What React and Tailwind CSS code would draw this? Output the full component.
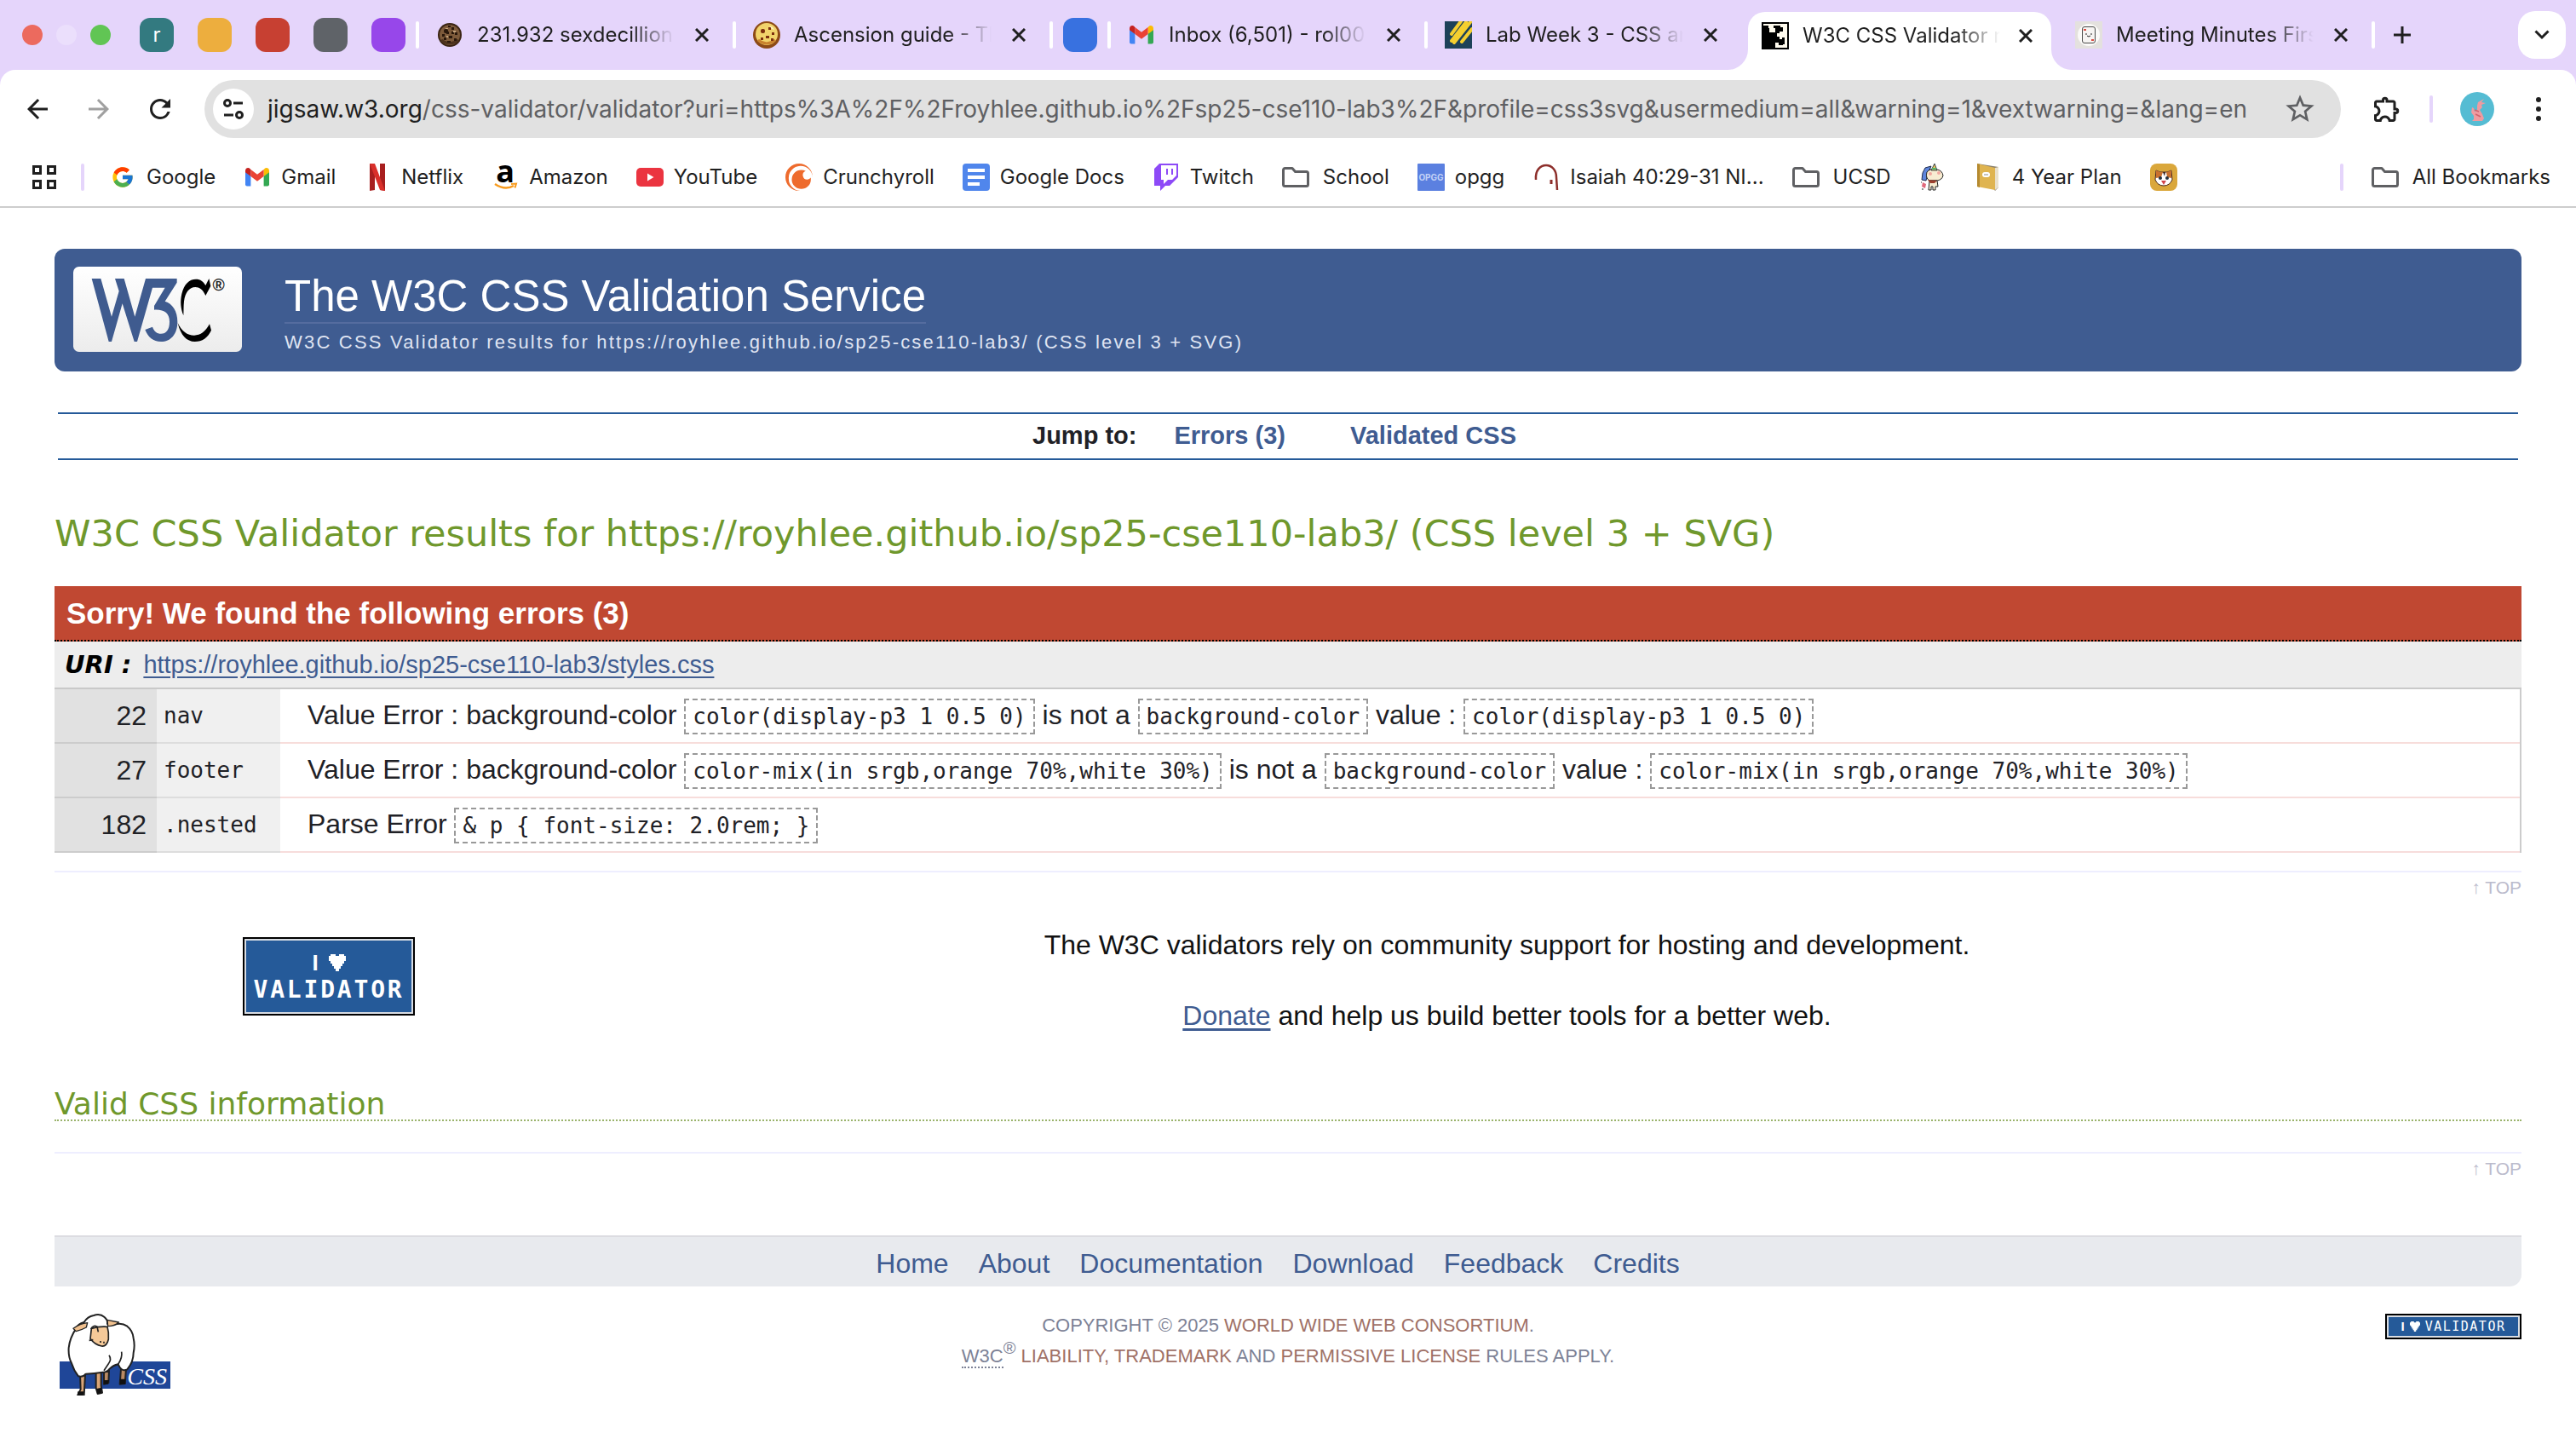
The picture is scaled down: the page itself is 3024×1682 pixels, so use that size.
import React from "react";
import { FcGoogle } from "react-icons/fc";
import { SiCrunchyroll } from "react-icons/si";
import {
  MdArrowBack,
  MdArrowForward,
  MdRefresh,
  MdStarBorder,
  MdOutlineExtension,
} from "react-icons/md";

const UI_FONT = "font-['Inter','Liberation_Sans',sans-serif]";
const PAGE_FONT = "font-['Liberation_Sans',Arial,sans-serif]";
const VERDANA = "font-['DejaVu_Sans',Verdana,sans-serif]";
const MONO = "font-['DejaVu_Sans_Mono',Menlo,monospace]";

/* ---------- favicons ---------- */

function Cookie({ dark }) {
  const base = dark ? "#7d5a3a" : "#f1d36b";
  const rim = dark ? "#3a2413" : "#8d4a17";
  const chip = dark ? "#2a180b" : "#7c2f0e";
  return (
    <svg viewBox="0 0 32 32" className="size-8 shrink-0" aria-hidden="true">
      <circle cx="16" cy="16" r={dark ? 14 : 16} fill={rim} />
      <circle cx="16" cy={dark ? 16 : 15} r={dark ? 12 : 13} fill={base} />
      <path d="M6 22q10 8 20 0" stroke={dark ? "#4d321c" : "#c9822e"} strokeWidth="3" fill="none" />
      <g fill={chip}>
        <rect x="9" y="9" width="5" height="5" rx="2" />
        <rect x="18" y="7" width="3" height="3" />
        <rect x="22" y="13" width="3" height="3" />
        <rect x="15" y="17" width="4" height="3" />
        <rect x="9" y="19" width="3" height="3" />
        <rect x="21" y="20" width="3" height="3" />
        {dark && <path d="M7 15h3v3H7zM12 12h3v3h-3zM18 12h3v3h-3zM13 23h4v2h-4zM14 5h3v2h-3z" />}
      </g>
      <path d={dark ? "M11 8h3v1h-3zM20 11h3v2h-3zM12 17h2v2h-2z" : "M19 5l4 2 2 3-3-1z"} fill={dark ? "#c5a57c" : "#fff3bf"} />
    </svg>
  );
}

function Gmail() {
  return (
    <svg viewBox="0 0 28 22" className="mx-0.5 w-7 shrink-0" aria-hidden="true">
      <path d="M0 4v15.5A2 2 0 0 0 2 21.500H6.400V9.500z" fill="#4285f4" />
      <path d="M28 4v15.500a2 2 0 0 1-2 2h-4.400V9.500z" fill="#34a853" />
      <path d="M21.600 2.200V10L28 5.200V3.400c0-3-3.300-4.200-5.500-2.500z" fill="#fbbc04" />
      <path d="M6.400 10V2L14 7.700 21.600 2v8L14 15.700z" fill="#ea4335" />
      <path d="M0 3.400v1.800L6.400 10V2.200L5.500.9C3.300-.8 0 .4 0 3.400z" fill="#c5221f" />
    </svg>
  );
}

function LabIcon() {
  return (
    <svg viewBox="0 0 32 32" className="size-8 shrink-0" aria-hidden="true">
      <rect width="32" height="32" fill="#1d4259" />
      <g stroke="#f5cf2f" strokeWidth="4" strokeLinecap="round">
        <path d="M8 15 19 0M8 23 25 1M11 25 30 1M20 24 32 9" />
      </g>
      <path d="M29 20 32 15v10z" fill="#1d4259" />
    </svg>
  );
}

function JigsawIcon() {
  return (
    <svg viewBox="0 0 32 32" className="size-8 shrink-0" aria-hidden="true">
      <rect width="32" height="32" fill="#000" />
      <path d="M2 2h28v28H16v-6h4v3h5v-1h2v-8h-3v2h-3v-3h-3v-4h3v-2h4V6h-3V4h-8v3h2v5H9V7H8V4H2z" fill="#fffbee" />
    </svg>
  );
}

function CardIcon() {
  return (
    <svg viewBox="0 0 32 32" className="size-8 shrink-0" aria-hidden="true">
      <rect width="32" height="32" fill="#e4e1de" />
      <circle cx="16" cy="16" r="13" fill="#fbfaf8" />
      <rect x="8.500" y="6.500" width="15" height="19" rx="2.500" fill="#f6f4f2" stroke="#4a4a4a" />
      <path d="M13 14v2M19 14v2M14 17q2 2 4 0" stroke="#222" fill="none" />
      <path d="M10 9h3v2h-3zM19 21h3v2h-3z" fill="#dc4b41" />
    </svg>
  );
}

/* ---------- tab strip ---------- */

const Divider = ({ className = "" }) => (
  <span className={"h-8 w-1 shrink-0 rounded-full bg-white " + className} />
);

const Close = ({ title }) => (
  <button type="button" aria-label={"Close " + title} className="ml-auto flex size-8 shrink-0 items-center justify-center">
    <svg viewBox="0 0 16 16" className="size-4" stroke="#1f1f1f" strokeWidth="3" aria-hidden="true">
      <path d="M1 1l14 14M15 1L1 15" />
    </svg>
  </button>
);

function TabBody({ icon, title }) {
  return (
    <>
      {icon}
      <span className="ml-4 w-[232px] overflow-hidden whitespace-nowrap text-2xl [mask-image:linear-gradient(to_right,black_78%,transparent)]">
        {title}
      </span>
      <Close title={title} />
    </>
  );
}

const Tab = (props) => (
  <div className="mx-5 flex w-[328px] shrink-0 items-center">
    <TabBody {...props} />
  </div>
);

function ActiveTab(props) {
  return (
    <div className="relative ml-2 flex h-[68px] w-[356px] shrink-0 items-center self-end rounded-t-[20px] bg-white pr-[14px] pb-3 pl-4">
      <svg viewBox="0 0 24 24" className="absolute bottom-0 -left-6 size-6" aria-hidden="true">
        <path d="M24 0v24H0A24 24 0 0 0 24 0z" fill="#fff" />
      </svg>
      <TabBody {...props} />
      <svg viewBox="0 0 24 24" className="absolute -right-6 bottom-0 size-6" aria-hidden="true">
        <path d="M0 0v24h24A24 24 0 0 1 0 0z" fill="#fff" />
      </svg>
    </div>
  );
}

function TabStrip() {
  return (
    <div className="flex h-[82px] items-center bg-[#e5d5fb] pr-3 pl-[26px]">
      <div className="flex shrink-0 gap-4">
        <span className="size-6 rounded-full bg-[#ec6a5e]" />
        <span className="size-6 rounded-full bg-[#ebdffc]" />
        <span className="size-6 rounded-full bg-[#61c554]" />
      </div>
      <div className="ml-[34px] flex shrink-0 gap-7">
        <span className="flex size-10 items-center justify-center rounded-xl bg-[#337a80] text-2xl text-white">r</span>
        <span className="size-10 rounded-xl bg-[#edae3e]" />
        <span className="size-10 rounded-xl bg-[#c74032]" />
        <span className="size-10 rounded-xl bg-[#5f6368]" />
        <span className="size-10 rounded-xl bg-[#9747ea]" />
      </div>
      <Divider className="ml-3" />
      <Tab icon={<Cookie dark />} title="231.932 sexdecillion" />
      <Divider />
      <Tab icon={<Cookie />} title="Ascension guide - Th" />
      <Divider />
      <span className="mx-3 size-10 shrink-0 rounded-xl bg-[#3871e0]" />
      <Divider />
      <Tab icon={<Gmail />} title="Inbox (6,501) - rol00" />
      <Divider />
      <Tab icon={<LabIcon />} title="Lab Week 3 - CSS an" />
      <ActiveTab icon={<JigsawIcon />} title="W3C CSS Validator r" />
      <div className="w-2 shrink-0" />
      <Tab icon={<CardIcon />} title="Meeting Minutes Firs" />
      <Divider />
      <button type="button" aria-label="New tab" className="ml-4 flex size-8 shrink-0 items-center justify-center">
        <svg viewBox="0 0 20 20" className="size-5" stroke="#1f1f1f" strokeWidth="3" aria-hidden="true">
          <path d="M10 0v20M0 10h20" />
        </svg>
      </button>
      <button type="button" aria-label="Search tabs" className="ml-auto flex size-14 shrink-0 items-center justify-center rounded-[20px] bg-white">
        <svg viewBox="0 0 18 12" className="w-[18px]" fill="none" stroke="#1f1f1f" strokeWidth="3" aria-hidden="true">
          <path d="M1.500 1.500 9 9l7.500-7.500" />
        </svg>
      </button>
    </div>
  );
}

/* ---------- toolbar ---------- */

function Toolbar() {
  return (
    <div className="bg-[#e5d5fb]">
      <div className="flex items-center rounded-t-[18px] bg-white pt-3 pr-7 pb-3 pl-[26px]">
        <button type="button" aria-label="Back"><MdArrowBack className="size-9 text-[#1f1f1f]" /></button>
        <button type="button" aria-label="Forward" className="ml-9"><MdArrowForward className="size-9 text-[#a0a0a0]" /></button>
        <button type="button" aria-label="Reload" className="ml-9"><MdRefresh className="size-9 text-[#1f1f1f]" /></button>
        <div className="ml-[34px] flex h-[68px] flex-1 items-center rounded-full bg-[#e1e1e1] pr-7 pl-[10px]">
          <button type="button" aria-label="View site information" className="flex size-12 items-center justify-center rounded-full bg-white">
            <svg viewBox="0 0 24 24" className="size-6" fill="none" stroke="#1f1f1f" strokeWidth="3" aria-hidden="true">
              <circle cx="5" cy="5" r="3.500" />
              <path d="M12 5h11" />
              <circle cx="19" cy="19" r="3.500" />
              <path d="M1 19h11" />
            </svg>
          </button>
          <div className="ml-4 whitespace-nowrap text-[28px] leading-9 text-[#5f6063]">
            <span className="text-[#1f1f1f]">jigsaw.w3.org</span>
            /css-validator/validator?uri=https%3A%2F%2Froyhlee.github.io%2Fsp25-cse110-lab3%2F&amp;profile=css3svg&amp;usermedium=all&amp;warning=1&amp;vextwarning=&amp;lang=en
          </div>
          <button type="button" aria-label="Bookmark this tab" className="ml-auto"><MdStarBorder className="size-10 text-[#5f6063]" /></button>
        </div>
        <button type="button" aria-label="Extensions" className="ml-9"><MdOutlineExtension className="size-9 text-[#1f1f1f]" /></button>
        <span className="ml-8 h-8 w-1 rounded-full bg-[#e5d5fb]" />
        <button type="button" aria-label="Profile" className="ml-8 size-10">
          <svg viewBox="0 0 40 40" className="size-10" aria-hidden="true">
            <circle cx="20" cy="20" r="20" fill="#55bcd3" />
            <path d="M20 16l1-4 7-4-3 4 5 1-5 2 1 3-3 3 3 5 2 5-2 3H14l2-2 0-4-3-4 1-6 2 1 1 4 3-2z" fill="#ef9ba0" />
            <path d="M17 21l5 2M18 26l6 3" stroke="#d0626c" strokeWidth="1.500" />
          </svg>
        </button>
        <button type="button" aria-label="Menu" className="ml-9 flex size-8 items-center justify-center">
          <svg viewBox="0 0 6 28" className="h-7" fill="#1f1f1f" aria-hidden="true">
            <circle cx="3" cy="3" r="3" />
            <circle cx="3" cy="14" r="3" />
            <circle cx="3" cy="25" r="3" />
          </svg>
        </button>
      </div>
    </div>
  );
}

/* ---------- bookmarks ---------- */

const Folder = () => (
  <svg viewBox="0 0 32 24" className="mr-1 w-8 shrink-0" fill="none" stroke="#5f6063" strokeWidth="3" strokeLinejoin="round" aria-hidden="true">
    <path d="M1.500 3.500a2 2 0 0 1 2-2h8.500l3.500 4h13a2 2 0 0 1 2 2v13a2 2 0 0 1-2 2h-25a2 2 0 0 1-2-2z" />
  </svg>
);

const Netflix = () => (
  <svg viewBox="0 0 32 32" className="size-8 shrink-0" aria-hidden="true">
    <path d="M7 0h6v31l-6 1zM19 0h6v32l-6-1z" fill="#a81f1f" />
    <path d="M7 0h6l12 32-6-1z" fill="#d9302b" />
  </svg>
);

const Amazon = () => (
  <svg viewBox="0 0 32 32" className="size-8 shrink-0" aria-hidden="true">
    <text x="16" y="22" textAnchor="middle" fontSize="36" fontWeight="700" fontFamily="Open Sans, sans-serif" fill="#000">a</text>
    <path d="M4 24q12 8 22 2" stroke="#f79b1e" strokeWidth="2.500" fill="none" />
    <path d="M23 24l6-.5-1.500 5" stroke="#f79b1e" strokeWidth="2" fill="none" />
  </svg>
);

const YouTube = () => (
  <svg viewBox="0 0 32 22" className="w-8 shrink-0" aria-hidden="true">
    <rect width="32" height="22" rx="5" fill="#eb3440" />
    <path d="M13 6.500v9l7.500-4.500z" fill="#fff" />
  </svg>
);

const Docs = () => (
  <svg viewBox="0 0 32 32" className="size-8 shrink-0" aria-hidden="true">
    <rect width="32" height="32" rx="4" fill="#5086ec" />
    <path d="M6 8h20M6 16h20M6 24h14" stroke="#fff" strokeWidth="4" />
  </svg>
);

const Twitch = () => (
  <svg viewBox="0 0 32 32" className="size-8 shrink-0" aria-hidden="true">
    <path d="M8 0 2 6v20h7v6l6-6h5l10-10V0z" fill="#8d4af7" />
    <path d="M10 2h18v12l-5 5h-5l-5 5v-5h-3z" fill="#fff" />
    <path d="M17 6v7M23 6v7" stroke="#8d4af7" strokeWidth="2" />
  </svg>
);

const Opgg = () => (
  <svg viewBox="0 0 32 32" className="size-8 shrink-0" aria-hidden="true">
    <rect width="32" height="32" rx="1" fill="#5b80e0" />
    <text x="16" y="20" textAnchor="middle" fontSize="10" fontWeight="700" fontFamily="Inter, sans-serif" fill="#c3d1f6">OPGG</text>
  </svg>
);

const Arch = () => (
  <svg viewBox="0 0 32 32" className="size-8 shrink-0" fill="none" stroke="#8d2f2b" aria-hidden="true">
    <path d="M4 19C3 8 9 2 16 2s12 6 12 14l1 15" strokeWidth="2.500" />
    <path d="M22 19v5" strokeWidth="3" />
  </svg>
);

const Unicorn = () => (
  <svg viewBox="0 0 32 32" className="size-8 shrink-0" aria-hidden="true">
    <path d="M14 3 7 5 4 11 3 19l5 1 2-8z" fill="#5f86dd" stroke="#1d2a4c" />
    <path d="M9 10q4-5 12-3 6 1 7 7-1 5-7 6H12q-5-3-3-10z" fill="#f8edd2" stroke="#222" />
    <path d="M14 8l4-8 3 8z" fill="#f0c95b" stroke="#39424b" />
    <path d="M15 6h5" stroke="#55b56a" strokeWidth="2" />
    <path d="M12 20h9l1 7h-3v4h-3v-4h-2v4h-3z" fill="#f8edd2" stroke="#222" />
    <path d="M10 19l11 1-3 3h-5z" fill="#9c3f2d" />
    <path d="M4 22l4 2-1 5-4-2z" fill="#e0697c" />
    <circle cx="13" cy="12" r="2" fill="#f2a7a0" />
    <circle cx="23" cy="11" r="2" fill="#f2a7a0" />
    <path d="M3 30h2M2 22h1" stroke="#222" />
  </svg>
);

const Book = () => (
  <svg viewBox="0 0 32 32" className="size-8 shrink-0" aria-hidden="true">
    <path d="M3 0l25 4v24l-4 4z" fill="#8b806c" />
    <path d="M24 5l4-1v24l-4 3z" fill="#e9e0cb" />
    <path d="M3 0l4 1 17 4v26L3 27z" fill="#dfb450" />
    <path d="M3 0l3 1v27l-3-1z" fill="#b58a30" />
    <rect x="9" y="10" width="9" height="6" rx="3" fill="#fff" />
    <path d="M11 13h5" stroke="#888" />
  </svg>
);

const Cat = () => (
  <svg viewBox="0 0 32 32" className="size-8 shrink-0" aria-hidden="true">
    <rect width="32" height="32" rx="8" fill="#daa73b" />
    <path d="M7 8l5 2h8l5-2 1 11q-3 7-10 7T6 19z" fill="#fff" stroke="#4a2a20" />
    <path d="M7 8l5 2h3l-2 6-6 1zM25 8l-5 2h-1l1 6 5 1z" fill="#c9702e" />
    <path d="M15 10h3l-1 5z" fill="#3b2722" />
    <circle cx="12" cy="17" r="2" fill="#24303c" />
    <circle cx="20" cy="17" r="2" fill="#24303c" />
    <path d="M13 20h6l-3 5z" fill="#d2434a" />
  </svg>
);

function Bookmark({ icon, label, name }) {
  return (
    <a href="#bookmark" aria-label={name || label} className="flex shrink-0 items-center gap-3 whitespace-nowrap">
      {icon}
      {label && <span>{label}</span>}
    </a>
  );
}

function Bookmarks() {
  return (
    <nav aria-label="Bookmarks" className="flex h-[70px] items-center gap-[33px] border-b-2 border-[#cdcdcd] bg-white pr-[30px] pl-[38px] text-2xl text-[#1f1f1f]">
      <button type="button" aria-label="Apps" className="shrink-0">
        <svg viewBox="0 0 28 28" className="size-7" fill="none" stroke="#1f1f1f" strokeWidth="3" aria-hidden="true">
          <path d="M1.500 1.500h8v8h-8zM18.500 1.500h8v8h-8zM1.500 18.500h8v8h-8zM18.500 18.500h8v8h-8z" />
        </svg>
      </button>
      <span className="-mx-1 h-8 w-1 shrink-0 rounded-full bg-[#e5d5fb]" />
      <Bookmark icon={<FcGoogle className="mx-0.5 size-7" />} label="Google" />
      <Bookmark icon={<Gmail />} label="Gmail" />
      <Bookmark icon={<Netflix />} label="Netflix" />
      <Bookmark icon={<Amazon />} label="Amazon" />
      <Bookmark icon={<YouTube />} label="YouTube" />
      <Bookmark icon={<SiCrunchyroll className="size-8 text-[#ee6b2d]" />} label="Crunchyroll" />
      <Bookmark icon={<Docs />} label="Google Docs" />
      <Bookmark icon={<Twitch />} label="Twitch" />
      <Bookmark icon={<Folder />} label="School" />
      <Bookmark icon={<Opgg />} label="opgg" />
      <Bookmark icon={<Arch />} label="Isaiah 40:29-31 NI..." />
      <Bookmark icon={<Folder />} label="UCSD" />
      <Bookmark icon={<Unicorn />} name="Unicorn" />
      <Bookmark icon={<Book />} label="4 Year Plan" />
      <Bookmark icon={<Cat />} name="Cat" />
      <span className="ml-auto h-8 w-1 shrink-0 rounded-full bg-[#e5d5fb]" />
      <Bookmark icon={<Folder />} label="All Bookmarks" />
    </nav>
  );
}

/* ---------- page ---------- */

function W3CLogo() {
  return (
    <svg viewBox="48 42 594 300" className="h-[100px] w-[198px] shrink-0" role="img" aria-label="W3C">
      <defs>
        <linearGradient id="plate" x1="0" y1="0" x2="0" y2="1">
          <stop offset="0" stopColor="#fff" />
          <stop offset="1" stopColor="#ececec" />
        </linearGradient>
      </defs>
      <rect x="48" y="42" width="594" height="300" rx="20" fill="url(#plate)" />
      <path
        d="M113 84h32l38 134 26-90-14-44h32l38 134 38-134h110v14l-42 66c26 8 44 34 44 72 0 44-24 70-58 70-28 0-46-16-56-42l26-10c6 16 16 24 30 24 18 0 30-14 30-42 0-30-18-44-54-42v-14l38-64h-44l-54 190h-10l-42-134-38 134h-10z"
        fill="#3f5b8f"
      />
      <path
        d="M526 84l6 26-18 34c-10-22-22-30-36-30-22 0-36 20-40 50-2 18-1 32-2 50-10-24-12-50-6-76 8-34 26-52 50-52 16 0 26 8 34 22zM416 240c14 30 34 44 58 44 22 0 40-14 54-40l6 22c-12 26-32 40-58 40-28 0-50-22-60-66z"
        fill="#000"
      />
      <text x="560" y="126" textAnchor="middle" fontSize="58" fontWeight="700" fontFamily="Liberation Sans, sans-serif" fill="#222">®</text>
    </svg>
  );
}

const Heart = ({ className }) => (
  <svg viewBox="0 0 20 20" className={className} fill="#fff" aria-hidden="true">
    <path d="M2 0h6v2h4V0h6v2h2v6h-2v3h-2v3h-2v3h-2v3H8v-3H6v-3H4v-3H2V8H0V2h2z" />
  </svg>
);

function Sheep() {
  return (
    <svg viewBox="90 366 390 288" className="h-24 w-[130px]" role="img" aria-label="CSS">
      <rect x="90" y="534" width="390" height="96" fill="#1f4698" />
      <g stroke="#222" strokeWidth="6" strokeLinejoin="round">
        <path d="M246 570l18-4-2 44-16 4zM306 560h18l-4 52-18 2z" fill="#b98a62" />
        <path d="M162 580h18l-4 72h-22l10-20zM218 572h18v48l4 24-16 4-6-20z" fill="#d9a577" />
        <path
          d="M176 396q12-20 34-24 22-8 38 6 12 10 10 24l26 2q24-8 44 6 20 16 22 42 6 26 0 52 0 32-22 58-20 10-32-18-18 4-30 16-12 14-24 12-30 4-60 6-8 12-26 8-16-20-24-46-12-22-10-54 4-36 26-68 6-16 28-22z"
          fill="#fff"
        />
        <path d="M138 418q24-18 50-20l-4 16q-18 10-36 14zM258 388l40 8q-14 14-38 14z" fill="#f0c08e" strokeWidth="4" />
        <path d="M202 418q26-8 56-6 6 20 4 44-6 26-24 24-24-4-40-26 2-18 4-36z" fill="#f5c998" strokeWidth="5" />
      </g>
      <path d="M200 420q8-16 22-8l4 18M234 462v6M246 464v6M194 460l14-2" stroke="#222" strokeWidth="5" fill="none" />
      <path d="M264 512q10 14-2 30l-16 24M308 500q4 20-12 44" stroke="#222" strokeWidth="5" fill="none" />
      <path d="M154 640h22l-4 14h-20zM220 630l18-4v20l-16 2zM246 600h18l-4 14h-14zM302 596h20v18h-20z" fill="#111" />
      <text x="328" y="614" fontSize="84" fontStyle="italic" fontWeight="400" fontFamily="Liberation Serif, serif" fill="#fff">CSS</text>
    </svg>
  );
}

const Code = ({ children }) => (
  <code className={"border-2 border-dashed border-[#999] px-2 py-1 text-[26px] " + MONO}>{children}</code>
);

const errors = [
  {
    line: 22,
    context: "nav",
    message: (
      <>
        Value Error : background-color <Code>color(display-p3 1 0.5 0)</Code> is not a <Code>background-color</Code> value :{" "}
        <Code>color(display-p3 1 0.5 0)</Code>
      </>
    ),
  },
  {
    line: 27,
    context: "footer",
    message: (
      <>
        Value Error : background-color <Code>color-mix(in srgb,orange 70%,white 30%)</Code> is not a <Code>background-color</Code> value :{" "}
        <Code>color-mix(in srgb,orange 70%,white 30%)</Code>
      </>
    ),
  },
  {
    line: 182,
    context: ".nested",
    message: (
      <>
        Parse Error <Code>{"& p { font-size: 2.0rem; }"}</Code>
      </>
    ),
  },
];

const BackToTop = () => (
  <div className="flex h-9 justify-end border-t-2 border-[#eeeeff] pt-1">
    <a href="#top" className="text-[21px] leading-7 text-[#bbbbcc]">↑ TOP</a>
  </div>
);

const footerLinks = ["Home", "About", "Documentation", "Download", "Feedback", "Credits"];

export default function App() {
  return (
    <div id="top" className="min-h-screen overflow-x-hidden bg-white">
      <header className={UI_FONT + " text-[#1f1f1f]"}>
        <TabStrip />
        <Toolbar />
        <Bookmarks />
      </header>

      <div className={"px-16 pt-12 pb-8 text-[#1f2126] " + PAGE_FONT}>
        <div className="flex h-36 rounded-xl bg-[#3f5c91] pt-[21px] pl-[22px]">
          <W3CLogo />
          <div className="ml-[50px]">
            <h1 className="w-fit border-b-2 border-[#556c9f] pt-1 text-[51px] leading-[61px] text-white">The W3C CSS Validation Service</h1>
            <p className="mt-1 text-[22px] leading-9 tracking-widest text-[#dfe4f2]">
              W3C CSS Validator results for https://royhlee.github.io/sp25-cse110-lab3/ (CSS level 3 + SVG)
            </p>
          </div>
        </div>

        <nav aria-label="Jump to" className="mx-1 mt-12 flex h-14 items-center justify-center border-y-2 border-[#255a99] text-[29px] font-bold">
          <span className="mr-11">Jump to:</span>
          <a href="#errors" className="mr-[76px] text-[#3f5c91]">Errors (3)</a>
          <a href="#css" className="mr-8 text-[#3f5c91]">Validated CSS</a>
        </nav>

        <h2 className={"mt-[62px] text-[43px] leading-12 text-[#6f982c] " + VERDANA}>
          W3C CSS Validator results for https://royhlee.github.io/sp25-cse110-lab3/ (CSS level 3 + SVG)
        </h2>

        <section id="errors" className="mt-[38px]">
          <h3 className="border-b-2 border-dotted border-black bg-[#c04832] pl-[14px] text-[35px] leading-[63px] font-bold text-white">
            Sorry! We found the following errors (3)
          </h3>
          <div className="flex items-center gap-3.5 border-b-2 border-[#c9c9c9] bg-[#ededed] pl-3 text-[29px] leading-[54px]">
            <h4 className={"font-bold text-black italic " + VERDANA}>URI :</h4>
            <a href="#styles" className="text-[#3f5c91] underline underline-offset-4">https://royhlee.github.io/sp25-cse110-lab3/styles.css</a>
          </div>
          <table className="w-full border-separate border-spacing-0 border-r-2 border-[#cccccc] text-[32px] leading-10">
            <tbody>
              {errors.map((e) => (
                <tr key={e.line} className="h-16">
                  <td className="w-[120px] border-b-2 border-[#cccccc] bg-[#e1e1e1] pr-3 text-right">{e.line}</td>
                  <td className={"w-[145px] border-b-2 border-[#dddddd] bg-[#f0f0f0] pl-2 text-[26px] " + MONO}>{e.context}</td>
                  <td className="border-b-2 border-[#f7dddb] pl-8">{e.message}</td>
                </tr>
              ))}
            </tbody>
          </table>
        </section>

        <div className="mt-[21px]">
          <BackToTop />
        </div>

        <section className="mt-7 flex items-start">
          <div className="mt-[14px] ml-[221px] flex h-[92px] w-[202px] shrink-0 flex-col items-center justify-center border-2 border-black bg-[#255a99] text-white shadow-[inset_0_0_0_2px_#d9dde3]">
            <div className="flex items-center gap-3">
              <span className="text-[26px] leading-8 font-bold">I</span>
              <Heart className="size-5" />
            </div>
            <div className={"text-[28px] leading-8 font-bold tracking-widest " + MONO}>VALIDATOR</div>
          </div>
          <div className="-mt-[18px] flex-1 pl-[91px] text-center text-[32px] leading-[83px] text-[#111]">
            <p>The W3C validators rely on community support for hosting and development.</p>
            <p>
              <a href="#donate" className="text-[#3f5c91] underline underline-offset-4">Donate</a> and help us build better tools for a better web.
            </p>
          </div>
        </section>

        <h2 id="css" className={"mt-11 border-b-2 border-dotted border-[#9ab36b] text-4xl leading-9 text-[#6f982c] " + VERDANA}>
          Valid CSS information
        </h2>

        <div className="mt-9">
          <BackToTop />
        </div>

        <footer className="mt-[62px]">
          <nav aria-label="Footer" className="flex h-[60px] items-center justify-center gap-[35px] rounded-br-[14px] border-t-2 border-[#dcdce1] bg-[#e8eaee] pt-1 pr-6 text-[32px] text-[#3f5c91]">
            {footerLinks.map((l) => (
              <a key={l} href={"#" + l.toLowerCase()}>{l}</a>
            ))}
          </nav>
          <div className="mt-8 flex items-start justify-between">
            <div className="w-40 pl-1.5">
              <Sheep />
            </div>
            <div className="text-center text-[22px] leading-9 text-[#7d8296]">
              <p className="-mt-1">
                COPYRIGHT © 2025 <a href="#w3c" className="text-[#a07167]">WORLD WIDE WEB CONSORTIUM</a>.
              </p>
              <p>
                <abbr className="border-b-2 border-dotted border-[#7d8296] no-underline" title="World Wide Web Consortium">W3C</abbr>
                <sup className="text-xl">®</sup> <a href="#liability" className="text-[#a07167]">LIABILITY, TRADEMARK</a> AND{" "}
                <a href="#license" className="text-[#a07167]">PERMISSIVE LICENSE</a> RULES APPLY.
              </p>
            </div>
            <div className="flex h-[30px] w-40 items-center justify-center gap-1.5 border-2 border-black bg-[#255a99] text-white shadow-[inset_0_0_0_2px_#d9dde3]">
              <span className="text-[15px] leading-5 font-bold">I</span>
              <Heart className="size-3" />
              <span className={"text-[15px] leading-5 tracking-widest " + MONO}>VALIDATOR</span>
            </div>
          </div>
        </footer>
      </div>
    </div>
  );
}
